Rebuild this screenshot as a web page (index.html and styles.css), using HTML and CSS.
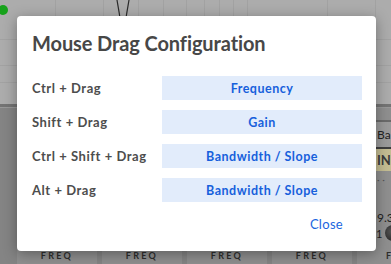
FILE: index.html
```html
<!DOCTYPE html>
<html>
<head>
<meta charset="utf-8">
<link rel="stylesheet" href="styles.css">
</head>
<body>
<div class="app">
  <svg class="graph" width="391" height="104" viewBox="0 0 391 104">
    <g stroke="#a2a2a2" stroke-width="1">
      <line x1="55.5" y1="0" x2="55.5" y2="104"/>
      <line x1="103.5" y1="0" x2="103.5" y2="104"/>
      <line x1="138.5" y1="0" x2="138.5" y2="104"/>
      <line x1="163.5" y1="0" x2="163.5" y2="104"/>
      <line x1="186.5" y1="0" x2="186.5" y2="104"/>
      <line x1="204.5" y1="0" x2="204.5" y2="104"/>
      <line x1="219.5" y1="0" x2="219.5" y2="104"/>
      <line x1="233.5" y1="0" x2="233.5" y2="104"/>
      <line x1="247.5" y1="0" x2="247.5" y2="104"/>
      <line x1="327.5" y1="0" x2="327.5" y2="104"/>
      <line x1="375.5" y1="0" x2="375.5" y2="104"/>
      <line x1="0" y1="39.5" x2="391" y2="39.5"/>
      <line x1="0" y1="65.5" x2="391" y2="65.5"/>
      <line x1="0" y1="82.5" x2="391" y2="82.5"/>
    </g>
    <path d="M117 0 C118 6 119 11 120 18" stroke="#2a2a2a" stroke-width="1.2" fill="none"/>
    <path d="M129 0 C128 6 127 11 126 18" stroke="#2a2a2a" stroke-width="1.2" fill="none"/>
    <circle cx="3" cy="10" r="5" fill="#17a21b"/>
  </svg>
  <div class="divider"></div>
  <div class="bands">
    <div class="band"><span class="freq">FREQ</span></div>
    <div class="band"><span class="freq">FREQ</span></div>
    <div class="band"><span class="freq">FREQ</span></div>
    <div class="band"><span class="freq">FREQ</span></div>
    <div class="band last">
      <div class="band-head">Ba</div>
      <div class="band-in">IN</div>
      <div class="band-dots">· ·</div>
      <div class="band-val">9.3</div>
      <div class="band-knob"><span>1</span><i class="knob"></i></div>
      <span class="freq">F</span>
    </div>
  </div>
</div>

<div class="modal">
  <h2 class="modal-title">Mouse Drag Configuration</h2>
  <div class="rows">
    <div class="row"><span class="label">Ctrl + Drag</span><button class="opt">Frequency</button></div>
    <div class="row"><span class="label">Shift + Drag</span><button class="opt">Gain</button></div>
    <div class="row"><span class="label">Ctrl + Shift + Drag</span><button class="opt">Bandwidth / Slope</button></div>
    <div class="row"><span class="label">Alt + Drag</span><button class="opt">Bandwidth / Slope</button></div>
  </div>
  <div class="actions"><button class="close">Close</button></div>
</div>
</body>
</html>
```
FILE: styles.css
```css
html, body {
  margin: 0;
  padding: 0;
}
body {
  width: 391px;
  height: 264px;
  overflow: hidden;
  background: #848484;
  font-family: "Lato", "Liberation Sans", sans-serif;
  position: relative;
}
.app {
  display: flex;
  flex-direction: column;
  height: 264px;
}
.graph {
  display: block;
  background: #acacac;
}
.divider {
  height: 3px;
  background: #747474;
  border-bottom: 1px solid #999;
}
.bands {
  flex: 1;
  display: flex;
  gap: 5px;
  padding-left: 17px;
}
.band {
  width: 80px;
  flex: none;
  background: #8f8f8f;
  display: flex;
  flex-direction: column;
  justify-content: flex-end;
  align-items: center;
}
.band.last {
  width: 34px;
  align-items: stretch;
  padding-left: 20px;
  justify-content: flex-start;
}
.freq {
  font-size: 9px;
  font-weight: 700;
  letter-spacing: 2.3px;
  color: #2e2e2e;
  line-height: 12px;
  margin-bottom: 2px;
}
.band.last .freq {
  margin-left: 9px;
  margin-top: auto;
}
.band-head {
  margin-top: 12px;
  border-top: 2px solid #6a6a6a;
  border-bottom: 2px solid #3e3e3e;
  background: #9b9b9b;
  font-size: 12px;
  color: #222;
  line-height: 25px;
  margin-left: -20px;
  padding-left: 20px;
}
.band-in {
  background: #c4bd93;
  color: #3a3a3a;
  font-weight: 700;
  font-size: 13px;
  line-height: 22px;
  margin-left: -20px;
  padding-left: 20px;
}
.band-dots {
  font-size: 10px;
  color: #555;
  line-height: 12px;
  margin-top: 2px;
}
.band-val {
  margin-top: 26px;
  font-size: 12px;
  color: #222;
  line-height: 14px;
}
.band-knob {
  display: flex;
  align-items: center;
  gap: 3px;
  font-size: 11px;
  color: #222;
  margin-left: -1px;
}
.knob {
  width: 16px;
  height: 16px;
  flex: none;
  border-radius: 50%;
  background: radial-gradient(circle at 40% 40%, #555, #1e1e1e);
}

.modal {
  position: absolute;
  left: 17px;
  top: 16px;
  width: 359px;
  height: 235px;
  box-sizing: border-box;
  background: #fff;
  border-radius: 4px;
  box-shadow: 0 3px 14px rgba(0, 0, 0, 0.35);
  padding: 15px 14px 0 15px;
}
.modal-title {
  margin: 0;
  font-size: 20px;
  line-height: 24px;
  font-weight: 700;
  color: #474747;
  letter-spacing: -0.1px;
}
.rows {
  margin-top: 21px;
  display: flex;
  flex-direction: column;
  gap: 10px;
}
.row {
  display: flex;
  align-items: center;
  height: 24px;
}
.label {
  width: 130px;
  font-size: 13px;
  font-weight: 700;
  color: #4d4d4d;
  letter-spacing: 0.55px;
}
.opt {
  width: 200px;
  height: 24px;
  border: 0;
  border-radius: 0;
  background: #e2ecfb;
  color: #1660dc;
  font-family: inherit;
  font-size: 12.5px;
  font-weight: 700;
  letter-spacing: 0.5px;
  padding: 0;
}
.actions {
  display: flex;
  justify-content: flex-end;
  margin-top: 10px;
}
.close {
  border: 0;
  background: transparent;
  color: #1a66e0;
  font-family: inherit;
  font-size: 13px;
  line-height: 24px;
  letter-spacing: 0.3px;
  padding: 0 19px;
}
```
